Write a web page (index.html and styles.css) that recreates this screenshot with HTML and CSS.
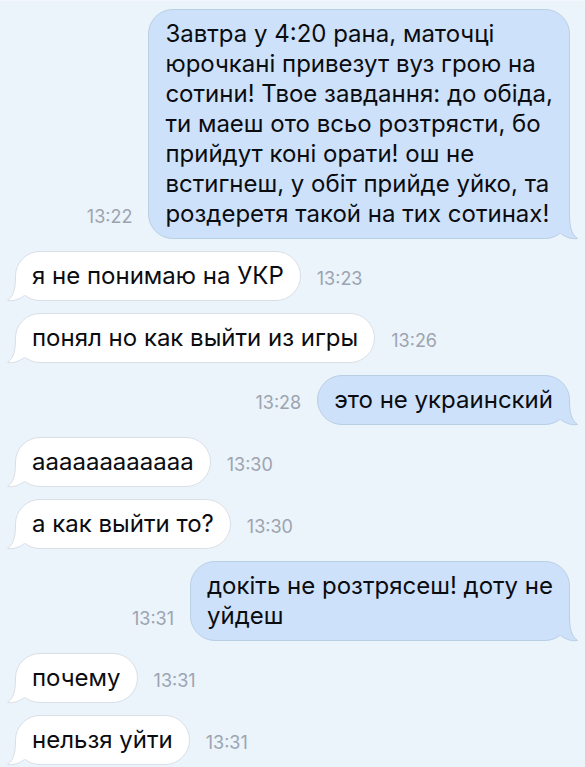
FILE: index.html
```
<!DOCTYPE html>
<html lang="ru">

<head>
    <meta charset="utf-8">
    <meta name="viewport" content="width=device-width, initial-scale=1.0">
    <title>Сообщения</title>
    <link rel="stylesheet" href="styles.css">
</head>

<body>
    <svg class="symbols" width="0" height="0" aria-hidden="true">
        <symbol id="tail" viewBox="0 0 24 26">
            <path class="tail-fill" d="M8.500 0C8.500 12 7 20 .5 24.500C8 25.500 13 22.500 17.500 19.500L22 18L12 0Z" />
            <path class="tail-line" d="M8.500 0C8.500 12 7 20 .5 24.500C8 25.500 13 22.500 17.500 19.500" />
        </symbol>
    </svg>

    <main class="chat">
        <article class="message out">
            <p class="bubble" lang="uk">Завтра у 4:20 рана, маточці<br>юрочкані привезут вуз грою на<br>сотини! Твое завдання: до обіда,<br>ти маеш ото всьо розтрясти, бо<br>прийдут коні орати! ош не<br>встигнеш, у обіт прийде уйко, та<br>роздеретя такой на тих сотинах!<svg class="tail"><use href="#tail" /></svg></p>
            <time class="time">13:22</time>
        </article>
        <article class="message in">
            <p class="bubble">я не понимаю на УКР<svg class="tail"><use href="#tail" /></svg></p>
            <time class="time">13:23</time>
        </article>
        <article class="message in">
            <p class="bubble">понял но как выйти из игры<svg class="tail"><use href="#tail" /></svg></p>
            <time class="time">13:26</time>
        </article>
        <article class="message out">
            <p class="bubble">это не украинский<svg class="tail"><use href="#tail" /></svg></p>
            <time class="time">13:28</time>
        </article>
        <article class="message in">
            <p class="bubble">аааааааааааа<svg class="tail"><use href="#tail" /></svg></p>
            <time class="time">13:30</time>
        </article>
        <article class="message in">
            <p class="bubble">а как выйти то?<svg class="tail"><use href="#tail" /></svg></p>
            <time class="time">13:30</time>
        </article>
        <article class="message out">
            <p class="bubble" lang="uk">докіть не розтрясеш! доту не<br>уйдеш<svg class="tail"><use href="#tail" /></svg></p>
            <time class="time">13:31</time>
        </article>
        <article class="message in">
            <p class="bubble">почему<svg class="tail"><use href="#tail" /></svg></p>
            <time class="time">13:31</time>
        </article>
        <article class="message in">
            <p class="bubble">нельзя уйти<svg class="tail"><use href="#tail" /></svg></p>
            <time class="time">13:31</time>
        </article>
    </main>
</body>

</html>
```
FILE: styles.css
```
body {
    margin: 0;
    background-color: #ebf3fb;
    font-family: Inter, "Noto Sans", sans-serif;
}

.symbols {
    position: absolute;
}

.chat {
    display: flex;
    flex-direction: column;
    gap: 12px;
    padding: 8px 15px 2px;
    border-top: 1px solid #f4f8fc;
}

.message {
    display: flex;
    align-items: flex-end;
    gap: 16px;
}

.out {
    flex-direction: row-reverse;
}

.bubble {
    position: relative;
    margin: 0;
    padding: 9px 16px;
    border: 1px solid #dadfe7;
    border-radius: 25px;
    background-color: white;
    color: #0b0c10;
    font-size: 24px;
    line-height: 30px;
}

.out .bubble {
    border-color: #b9cfe4;
    background-color: #cee1fa;
}

.time {
    padding-bottom: 11px;
    color: #9ca4b0;
    font-size: 18px;
    line-height: 22px;
}

/* the little tail in the lower corner of a bubble */
.tail {
    position: absolute;
    left: -9px;
    bottom: -2px;
    width: 24px;
    height: 26px;
    fill: white;
    stroke: #dadfe7;
}

.out .tail {
    left: auto;
    right: -9px;
    transform: scaleX(-1);
    fill: #cee1fa;
    stroke: #b9cfe4;
}

.tail-fill {
    stroke: none;
}

.tail-line {
    fill: none;
}
```
